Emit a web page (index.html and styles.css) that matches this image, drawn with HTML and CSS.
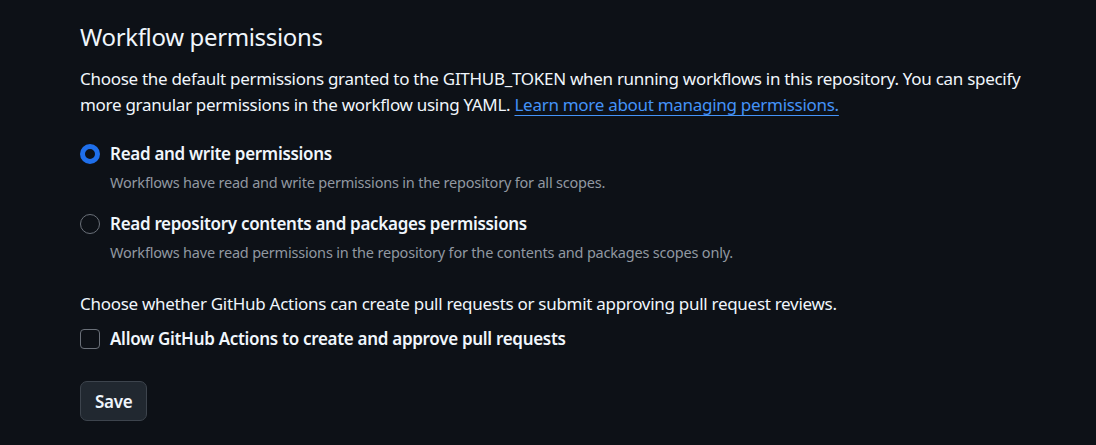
FILE: index.html
```html
<!DOCTYPE html>
<html lang="en">
<head>
<meta charset="utf-8">
<title>Workflow permissions</title>
<link rel="stylesheet" href="styles.css">
</head>
<body>
<main class="settings">
  <h2 class="section-title">Workflow permissions</h2>
  <p class="section-text">Choose the default permissions granted to the GITHUB_TOKEN when running workflows in this repository. You can specify more granular permissions in the workflow using YAML. <a class="link" href="#">Learn more about managing permissions.</a></p>

  <div class="options">
    <label class="option">
      <span class="option-row">
        <input class="radio" type="radio" name="perm" checked>
        <span class="option-label">Read and write permissions</span>
      </span>
      <span class="option-note">Workflows have read and write permissions in the repository for all scopes.</span>
    </label>
    <label class="option option-second">
      <span class="option-row">
        <input class="radio" type="radio" name="perm">
        <span class="option-label">Read repository contents and packages permissions</span>
      </span>
      <span class="option-note">Workflows have read permissions in the repository for the contents and packages scopes only.</span>
    </label>
  </div>

  <p class="section-text section-text-second">Choose whether GitHub Actions can create pull requests or submit approving pull request reviews.</p>
  <label class="option-row check-row">
    <input class="checkbox" type="checkbox">
    <span class="option-label">Allow GitHub Actions to create and approve pull requests</span>
  </label>

  <button class="btn" type="button">Save</button>
</main>
</body>
</html>
```

FILE: styles.css
```css
* { box-sizing: border-box; }
html, body {
  margin: 0;
  padding: 0;
  background: #0d1117;
}
body {
  font-family: "Noto Sans", "Open Sans", sans-serif;
  color: #f0f6fc;
}
.settings {
  width: 1040px;
  padding: 21px 0 0 80px;
  display: flex;
  flex-direction: column;
  align-items: flex-start;
}
.section-title {
  margin: 0;
  font-size: 24px;
  line-height: 32px;
  font-weight: 400;
  letter-spacing: -0.35px;
}
.section-text {
  margin: 13px 0 0;
  font-size: 17px;
  line-height: 26px;
  letter-spacing: -0.29px;
}
.link {
  color: #4493f8;
  text-decoration: underline;
  text-underline-offset: 4px;
}
.options {
  margin-top: 23px;
  display: flex;
  flex-direction: column;
  gap: 18px;
}
.option {
  display: flex;
  flex-direction: column;
  gap: 4px;
}
.option-row {
  display: flex;
  align-items: center;
  gap: 10px;
}
.option-label {
  font-size: 17px;
  line-height: 26px;
  font-weight: 600;
  letter-spacing: -0.3px;
}
.option-note {
  padding-left: 30px;
  font-size: 14.5px;
  line-height: 22px;
  letter-spacing: -0.2px;
  color: #9198a1;
}
.radio {
  appearance: none;
  margin: 0;
  width: 20px;
  height: 20px;
  border-radius: 50%;
  border: 1px solid #6a7079;
  background: #0d1117;
}
.radio:checked {
  border: 5.5px solid #1f6feb;
  background: #0d1117;
}
.section-text-second {
  margin-top: 28px;
}
.check-row {
  margin-top: 9px;
}
.checkbox {
  appearance: none;
  margin: 0;
  width: 20px;
  height: 20px;
  border-radius: 4px;
  border: 1px solid #6a7079;
  background: #0d1117;
}
.btn {
  margin-top: 29px;
  height: 40px;
  padding: 0 14px;
  border: 1px solid #3d444d;
  border-radius: 7px;
  background: #212830;
  color: #f0f6fc;
  font-family: inherit;
  font-size: 17px;
  font-weight: 600;
  letter-spacing: -0.3px;
}
```
